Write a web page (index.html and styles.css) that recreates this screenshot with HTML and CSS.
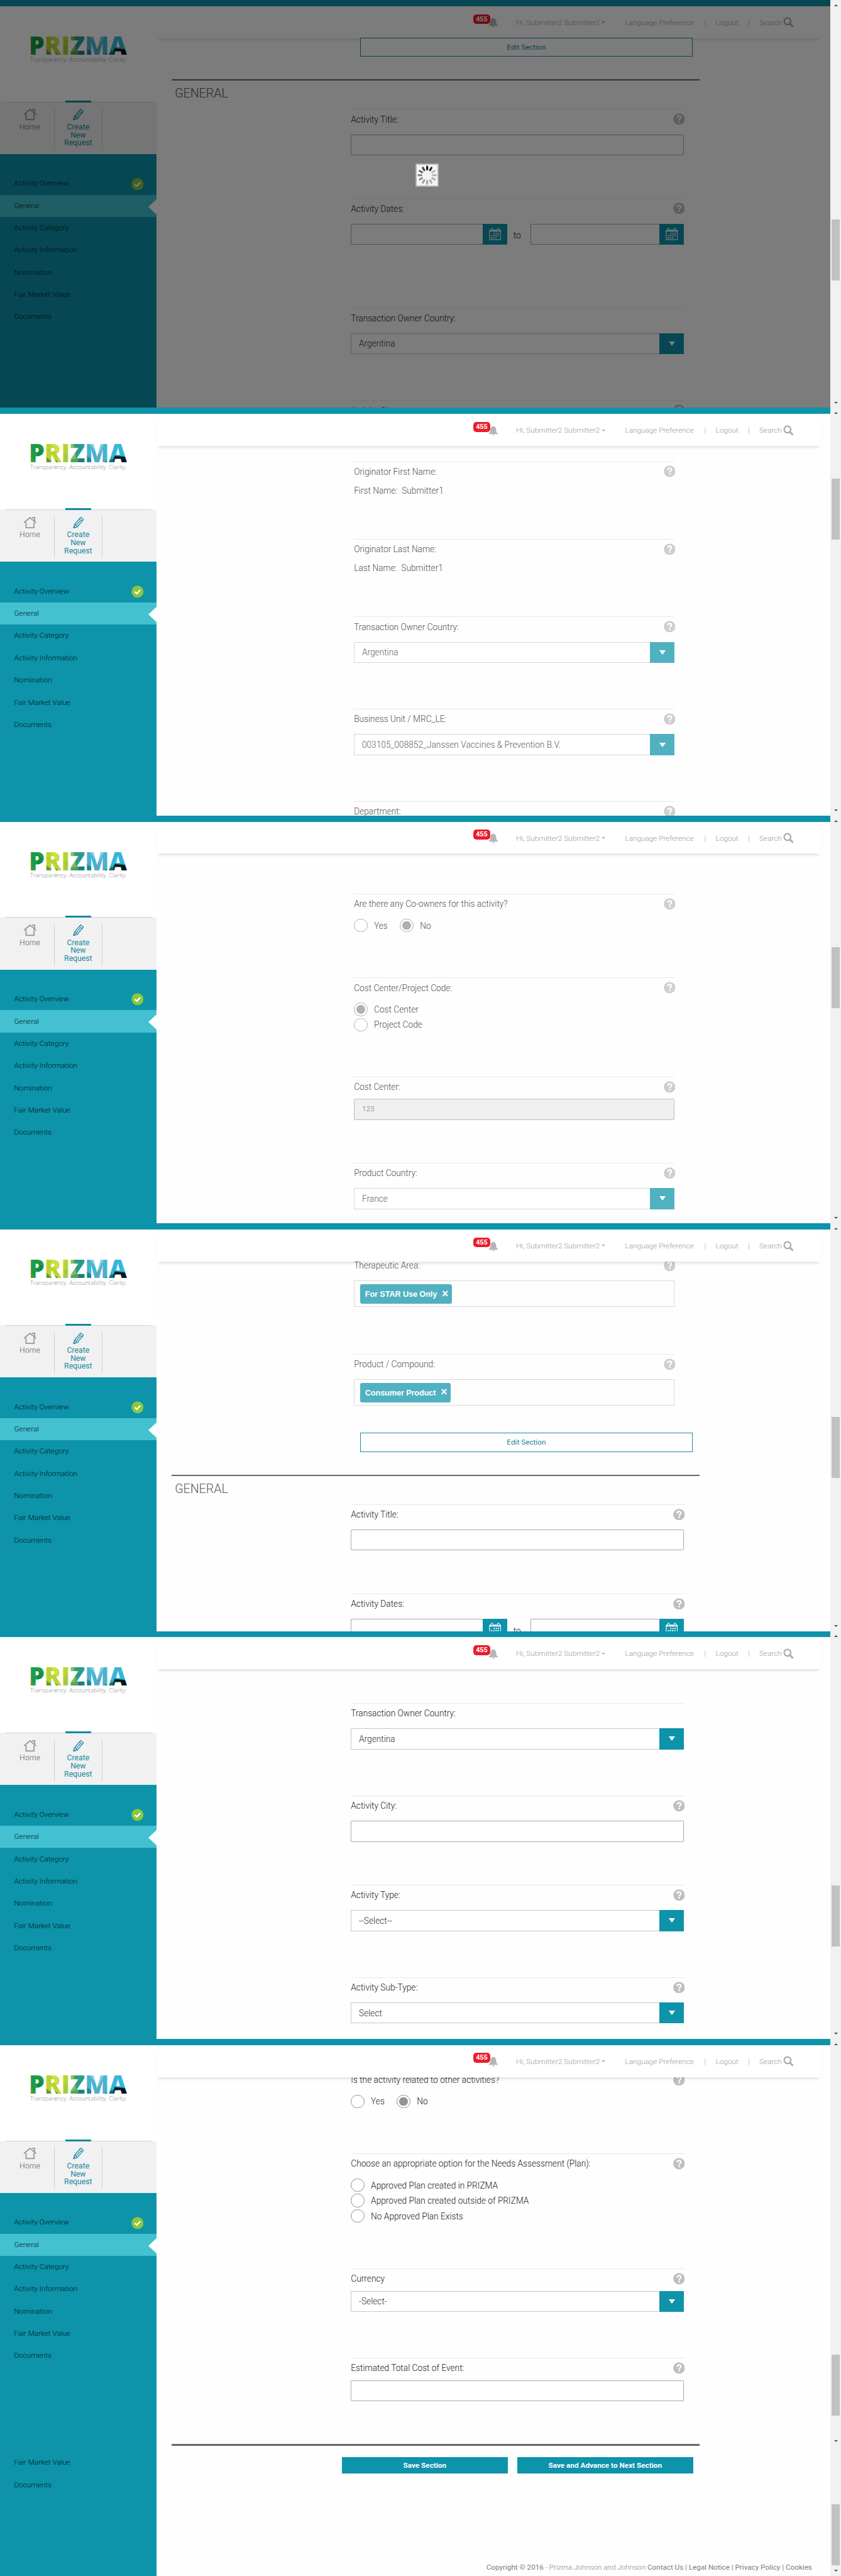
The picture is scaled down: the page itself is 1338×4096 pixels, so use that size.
FILE: index.html
```html
<!DOCTYPE html>
<html lang="en">
<head>
<meta charset="utf-8">
<title>PRIZMA - Create New Request</title>
<link rel="stylesheet" href="styles.css">
</head>
<body>
<svg class="defs" width="0" height="0" aria-hidden="true">
  <defs>
    <pattern id="facets" width="160" height="44" patternUnits="userSpaceOnUse">
      <rect width="160" height="44" fill="#1c9c48"/>
      <path d="M0 22L14 30V42H0Z" fill="#3f9a3c"/><path d="M10 4L26 14L14 30Z" fill="#0f8f3f"/>
      <path d="M24 0H64V42H24Z" fill="#b9d430"/><path d="M24 20L40 32L48 42H24Z" fill="#5d9a3a"/>
      <path d="M34 0L52 0L44 18Z" fill="#cfe03a"/><path d="M40 26L50 34V42H38Z" fill="#2c5d34"/>
      <path d="M52 20L64 14V42H52Z" fill="#a5cb3c"/>
      <path d="M64 0H90V42H64Z" fill="#7fbf55"/><path d="M72 0H90V16L76 26Z" fill="#2f9a8a"/>
      <path d="M64 28L90 20V42H64Z" fill="#4aa564"/><path d="M80 24L90 20V42H76Z" fill="#1b7f78"/>
      <path d="M89 0H130V42H89Z" fill="#46b3cf"/><path d="M89 18L102 26L96 42H89Z" fill="#1a8796"/>
      <path d="M96 0L112 18L122 0Z" fill="#7cc9e0"/><path d="M108 20L122 12V42H112Z" fill="#5aa9c2"/>
      <path d="M124 42L134 22L142 0H126Z" fill="#2eb0cf"/><path d="M126 0H160V22L134 24Z" fill="#33b7da"/>
      <path d="M122 30L140 24L136 42H122Z" fill="#146a7a"/><path d="M138 20L160 22V42H134Z" fill="#04171c"/>
    </pattern>
    <symbol id="logo" viewBox="0 0 160 44">
      <text x="-1" y="31" class="logo-word" textLength="159" lengthAdjust="spacingAndGlyphs" fill="url(#facets)">PRIZMA</text>
      <text x="1" y="41.5" class="logo-tag" textLength="157" lengthAdjust="spacingAndGlyphs">Transparency. Accountability. Clarity.</text>
    </symbol>
    <symbol id="home" viewBox="0 0 22 20">
      <path d="M1 10.5L11 2L21 10.5M14.5 2H18.5V8M4.5 9.5V18.6H17.5V9.5" fill="none" stroke="#9b9b9b" stroke-width="1.9"/>
    </symbol>
    <symbol id="pencil" viewBox="0 0 18 20">
      <path d="M1 19L2.8 13L12.6 1.6L17 5.4L7.2 17ZM2.8 13L7.2 17M10.4 4.2L14.8 8M5 15L13 5.8" fill="none" stroke="#1888a0" stroke-width="1.3" stroke-linejoin="round"/>
      <path d="M1 19L2 15.6L4.4 17.8Z" fill="#1888a0"/>
    </symbol>
    <symbol id="check" viewBox="0 0 20 20">
      <circle cx="10" cy="10" r="9.7" fill="#8dc63f"/>
      <path d="M5.5 10.2L8.8 13.2L14.6 7.2" fill="none" stroke="#fff" stroke-width="2.4"/>
    </symbol>
    <symbol id="bell" viewBox="0 0 16 16">
      <path d="M8 0.5C5 1 3.4 3.2 3.4 6.5C3.4 10 2.4 11.4 0.5 12.8V13.5H15.5V12.8C13.6 11.4 12.6 10 12.6 6.5C12.6 3.2 11 1 8 0.5ZM6 14.2A2 1.8 0 0 0 10 14.2Z" fill="#b5b5b5"/>
    </symbol>
    <symbol id="search" viewBox="0 0 17 17">
      <circle cx="7" cy="7" r="5.4" fill="none" stroke="#acacac" stroke-width="2.3"/>
      <path d="M11 11L15.2 15.2" stroke="#acacac" stroke-width="3" stroke-linecap="round"/>
    </symbol>
    <symbol id="help" viewBox="0 0 20 20">
      <circle cx="10" cy="10" r="9.8" fill="#bfbfbf"/>
      <path d="M6.9 7.8C7 5.6 8.3 4.7 10.1 4.7C12 4.7 13.2 5.8 13.2 7.4C13.2 9.6 10.3 9.6 10.3 12.2" fill="none" stroke="#fff" stroke-width="2.5"/>
      <rect x="9" y="13.4" width="2.6" height="2.6" fill="#fff"/>
    </symbol>
    <symbol id="calendar" viewBox="0 0 20 21">
      <path d="M1 4.5H19V19.5H1Z" fill="none" stroke="#fff" stroke-width="1.2"/>
      <path d="M1 3.5H19V6.5H1Z" fill="#fff"/>
      <path d="M3.5 5V1H6V5M14 5V1H16.5V5" fill="#0d93aa" stroke="#fff" stroke-width="1"/>
      <path d="M7.5 9.5H17M3.5 13H17M3.5 16.5H13.5" stroke="#fff" stroke-width="2" stroke-dasharray="2 1.5"/>
    </symbol>
  </defs>
</svg>

<div class="page">

<section class="frame frame-1">
  <div class="topbar"></div>
  <aside class="sidebar">
    <div class="brand"><svg class="logo"><use href="#logo"/></svg></div>
    <nav class="tabs">
      <a class="tab home"><svg class="tab-icon"><use href="#home"/></svg>Home</a>
      <a class="tab create"><svg class="tab-icon"><use href="#pencil"/></svg>Create<br>New<br>Request</a>
    </nav>
    <ul class="menu">
      <li>Activity Overview<svg class="check"><use href="#check"/></svg></li>
      <li class="current">General</li><li>Activity Category</li><li>Activity Information</li><li>Nomination</li><li>Fair Market Value</li><li>Documents</li>
    </ul>
  </aside>
  <main class="main">
    <header class="header">
      <span class="alerts"><b class="badge">455</b><svg class="bell"><use href="#bell"/></svg></span>
      <span class="user">Hi, Submitter2 Submitter2<i class="caret"></i></span>
      <span class="lang">Language Preference</span><span class="bar">|</span><span class="logout">Logout</span><span class="bar">|</span>
      <span class="search">Search</span><svg class="glass"><use href="#search"/></svg>
    </header>
    <a class="edit">Edit Section</a>
    <h2 class="section-title">GENERAL</h2>
    <div class="field">
      <div class="label">Activity Title:<svg class="help"><use href="#help"/></svg></div>
      <div class="input"></div>
    </div>
    <div class="field dates-field">
      <div class="label">Activity Dates:<svg class="help"><use href="#help"/></svg></div>
      <div class="dates"><div class="date from"><span class="cal"><svg><use href="#calendar"/></svg></span></div><span class="to">to</span><div class="date until"><span class="cal"><svg><use href="#calendar"/></svg></span></div></div>
    </div>
    <div class="field select-field">
      <div class="label">Transaction Owner Country:</div>
      <div class="select">Argentina<span class="drop"></span></div>
    </div>
    <div class="field">
      <div class="label">Activity City:<svg class="help"><use href="#help"/></svg></div>
      <div class="input"></div>
    </div>
  </main>
  <div class="scrollbar"><i class="up"></i><i class="thumb"></i><i class="down"></i></div>
  <div class="veil">
    <svg class="spinner" viewBox="-17 -17 34 34">
      <g stroke-width="3.2" stroke-linecap="round">
        <path d="M0-9.5V-14" stroke="#111"/><path d="M0-9.5V-14" stroke="#222" transform="rotate(30)"/>
        <path d="M0-9.5V-14" stroke="#bbb" transform="rotate(60)"/><path d="M0-9.5V-14" stroke="#b5b5b5" transform="rotate(90)"/>
        <path d="M0-9.5V-14" stroke="#b0b0b0" transform="rotate(120)"/><path d="M0-9.5V-14" stroke="#aaa" transform="rotate(150)"/>
        <path d="M0-9.5V-14" stroke="#a5a5a5" transform="rotate(180)"/><path d="M0-9.5V-14" stroke="#9c9c9c" transform="rotate(210)"/>
        <path d="M0-9.5V-14" stroke="#939393" transform="rotate(240)"/><path d="M0-9.5V-14" stroke="#858585" transform="rotate(270)"/>
        <path d="M0-9.5V-14" stroke="#6a6a6a" transform="rotate(300)"/><path d="M0-9.5V-14" stroke="#444" transform="rotate(330)"/>
      </g>
    </svg>
  </div>
</section>

<section class="frame frame-2">
  <div class="topbar"></div>
  <aside class="sidebar">
    <div class="brand"><svg class="logo"><use href="#logo"/></svg></div>
    <nav class="tabs">
      <a class="tab home"><svg class="tab-icon"><use href="#home"/></svg>Home</a>
      <a class="tab create"><svg class="tab-icon"><use href="#pencil"/></svg>Create<br>New<br>Request</a>
    </nav>
    <ul class="menu">
      <li>Activity Overview<svg class="check"><use href="#check"/></svg></li>
      <li class="current">General</li><li>Activity Category</li><li>Activity Information</li><li>Nomination</li><li>Fair Market Value</li><li>Documents</li>
    </ul>
  </aside>
  <main class="main">
    <header class="header">
      <span class="alerts"><b class="badge">455</b><svg class="bell"><use href="#bell"/></svg></span>
      <span class="user">Hi, Submitter2 Submitter2<i class="caret"></i></span>
      <span class="lang">Language Preference</span><span class="bar">|</span><span class="logout">Logout</span><span class="bar">|</span>
      <span class="search">Search</span><svg class="glass"><use href="#search"/></svg>
    </header>
    <div class="locked">
      <div class="field text-field">
        <div class="label">Originator First Name:<svg class="help"><use href="#help"/></svg></div>
        <div class="value">First Name:&nbsp; Submitter1</div>
      </div>
      <div class="field text-field">
        <div class="label">Originator Last Name:<svg class="help"><use href="#help"/></svg></div>
        <div class="value">Last Name:&nbsp; Submitter1</div>
      </div>
      <div class="field select-field">
        <div class="label">Transaction Owner Country:<svg class="help"><use href="#help"/></svg></div>
        <div class="select">Argentina<span class="drop"></span></div>
      </div>
      <div class="field select-field">
        <div class="label">Business Unit / MRC_LE:<svg class="help"><use href="#help"/></svg></div>
        <div class="select">003105_008852_Janssen Vaccines &amp; Prevention B.V.<span class="drop"></span></div>
      </div>
      <div class="field">
        <div class="label">Department:<svg class="help"><use href="#help"/></svg></div>
      </div>
    </div>
  </main>
  <div class="scrollbar"><i class="up"></i><i class="thumb"></i><i class="down"></i></div>
</section>

<section class="frame frame-3">
  <div class="topbar"></div>
  <aside class="sidebar">
    <div class="brand"><svg class="logo"><use href="#logo"/></svg></div>
    <nav class="tabs">
      <a class="tab home"><svg class="tab-icon"><use href="#home"/></svg>Home</a>
      <a class="tab create"><svg class="tab-icon"><use href="#pencil"/></svg>Create<br>New<br>Request</a>
    </nav>
    <ul class="menu">
      <li>Activity Overview<svg class="check"><use href="#check"/></svg></li>
      <li class="current">General</li><li>Activity Category</li><li>Activity Information</li><li>Nomination</li><li>Fair Market Value</li><li>Documents</li>
    </ul>
  </aside>
  <main class="main">
    <header class="header">
      <span class="alerts"><b class="badge">455</b><svg class="bell"><use href="#bell"/></svg></span>
      <span class="user">Hi, Submitter2 Submitter2<i class="caret"></i></span>
      <span class="lang">Language Preference</span><span class="bar">|</span><span class="logout">Logout</span><span class="bar">|</span>
      <span class="search">Search</span><svg class="glass"><use href="#search"/></svg>
    </header>
    <div class="locked">
      <div class="field owners-field">
        <div class="label">Are there any Co-owners for this activity?<svg class="help"><use href="#help"/></svg></div>
        <div class="radios"><span class="radio"></span><span class="choice">Yes</span><span class="radio on"></span><span class="choice">No</span></div>
      </div>
      <div class="field code-field">
        <div class="label">Cost Center/Project Code:<svg class="help"><use href="#help"/></svg></div>
        <div class="radios"><span class="radio on"></span><span class="choice">Cost Center</span></div>
        <div class="radios"><span class="radio"></span><span class="choice">Project Code</span></div>
      </div>
      <div class="field tight center-field">
        <div class="label">Cost Center:<svg class="help"><use href="#help"/></svg></div>
        <div class="input disabled">123</div>
      </div>
      <div class="field select-field">
        <div class="label">Product Country:<svg class="help"><use href="#help"/></svg></div>
        <div class="select">France<span class="drop"></span></div>
      </div>
    </div>
  </main>
  <div class="scrollbar"><i class="up"></i><i class="thumb"></i><i class="down"></i></div>
</section>

<section class="frame frame-4">
  <div class="topbar"></div>
  <aside class="sidebar">
    <div class="brand"><svg class="logo"><use href="#logo"/></svg></div>
    <nav class="tabs">
      <a class="tab home"><svg class="tab-icon"><use href="#home"/></svg>Home</a>
      <a class="tab create"><svg class="tab-icon"><use href="#pencil"/></svg>Create<br>New<br>Request</a>
    </nav>
    <ul class="menu">
      <li>Activity Overview<svg class="check"><use href="#check"/></svg></li>
      <li class="current">General</li><li>Activity Category</li><li>Activity Information</li><li>Nomination</li><li>Fair Market Value</li><li>Documents</li>
    </ul>
  </aside>
  <main class="main">
    <header class="header">
      <span class="alerts"><b class="badge">455</b><svg class="bell"><use href="#bell"/></svg></span>
      <span class="user">Hi, Submitter2 Submitter2<i class="caret"></i></span>
      <span class="lang">Language Preference</span><span class="bar">|</span><span class="logout">Logout</span><span class="bar">|</span>
      <span class="search">Search</span><svg class="glass"><use href="#search"/></svg>
    </header>
    <div class="locked">
      <div class="field tag-field">
        <div class="label">Therapeutic Area:<svg class="help"><use href="#help"/></svg></div>
        <div class="tags"><span class="tag">For STAR Use Only<b class="remove">×</b></span></div>
      </div>
      <div class="field tag-field last">
        <div class="label">Product / Compound:<svg class="help"><use href="#help"/></svg></div>
        <div class="tags"><span class="tag">Consumer Product<b class="remove">×</b></span></div>
      </div>
    </div>
    <a class="edit">Edit Section</a>
    <h2 class="section-title">GENERAL</h2>
    <div class="field">
      <div class="label">Activity Title:<svg class="help"><use href="#help"/></svg></div>
      <div class="input"></div>
    </div>
    <div class="field dates-field">
      <div class="label">Activity Dates:<svg class="help"><use href="#help"/></svg></div>
      <div class="dates"><div class="date from"><span class="cal"><svg><use href="#calendar"/></svg></span></div><span class="to">to</span><div class="date until"><span class="cal"><svg><use href="#calendar"/></svg></span></div></div>
    </div>
  </main>
  <div class="scrollbar"><i class="up"></i><i class="thumb"></i><i class="down"></i></div>
</section>

<section class="frame frame-5">
  <div class="topbar"></div>
  <aside class="sidebar">
    <div class="brand"><svg class="logo"><use href="#logo"/></svg></div>
    <nav class="tabs">
      <a class="tab home"><svg class="tab-icon"><use href="#home"/></svg>Home</a>
      <a class="tab create"><svg class="tab-icon"><use href="#pencil"/></svg>Create<br>New<br>Request</a>
    </nav>
    <ul class="menu">
      <li>Activity Overview<svg class="check"><use href="#check"/></svg></li>
      <li class="current">General</li><li>Activity Category</li><li>Activity Information</li><li>Nomination</li><li>Fair Market Value</li><li>Documents</li>
    </ul>
  </aside>
  <main class="main">
    <header class="header">
      <span class="alerts"><b class="badge">455</b><svg class="bell"><use href="#bell"/></svg></span>
      <span class="user">Hi, Submitter2 Submitter2<i class="caret"></i></span>
      <span class="lang">Language Preference</span><span class="bar">|</span><span class="logout">Logout</span><span class="bar">|</span>
      <span class="search">Search</span><svg class="glass"><use href="#search"/></svg>
    </header>
    <div class="fields">
      <div class="field select-field">
        <div class="label">Transaction Owner Country:</div>
        <div class="select">Argentina<span class="drop"></span></div>
      </div>
      <div class="field">
        <div class="label">Activity City:<svg class="help"><use href="#help"/></svg></div>
        <div class="input"></div>
      </div>
      <div class="field select-field">
        <div class="label">Activity Type:<svg class="help"><use href="#help"/></svg></div>
        <div class="select">--Select--<span class="drop"></span></div>
      </div>
      <div class="field">
        <div class="label">Activity Sub-Type:<svg class="help"><use href="#help"/></svg></div>
        <div class="select">Select<span class="drop"></span></div>
      </div>
    </div>
  </main>
  <div class="scrollbar"><i class="up"></i><i class="thumb"></i><i class="down"></i></div>
</section>

<section class="frame frame-6">
  <div class="topbar"></div>
  <aside class="sidebar">
    <div class="brand"><svg class="logo"><use href="#logo"/></svg></div>
    <nav class="tabs">
      <a class="tab home"><svg class="tab-icon"><use href="#home"/></svg>Home</a>
      <a class="tab create"><svg class="tab-icon"><use href="#pencil"/></svg>Create<br>New<br>Request</a>
    </nav>
    <ul class="menu">
      <li>Activity Overview<svg class="check"><use href="#check"/></svg></li>
      <li class="current">General</li><li>Activity Category</li><li>Activity Information</li><li>Nomination</li><li>Fair Market Value</li><li>Documents</li>
    </ul>
  </aside>
  <main class="main">
    <header class="header">
      <span class="alerts"><b class="badge">455</b><svg class="bell"><use href="#bell"/></svg></span>
      <span class="user">Hi, Submitter2 Submitter2<i class="caret"></i></span>
      <span class="lang">Language Preference</span><span class="bar">|</span><span class="logout">Logout</span><span class="bar">|</span>
      <span class="search">Search</span><svg class="glass"><use href="#search"/></svg>
    </header>
    <div class="fields">
      <div class="field owners-field">
        <div class="label">Is the activity related to other activities?<svg class="help"><use href="#help"/></svg></div>
        <div class="radios"><span class="radio"></span><span class="choice">Yes</span><span class="radio on"></span><span class="choice">No</span></div>
      </div>
      <div class="field plan-field">
        <div class="label">Choose an appropriate option for the Needs Assessment (Plan):<svg class="help"><use href="#help"/></svg></div>
        <div class="radios"><span class="radio"></span><span class="choice">Approved Plan created in PRIZMA</span></div>
        <div class="radios"><span class="radio"></span><span class="choice">Approved Plan created outside of PRIZMA</span></div>
        <div class="radios"><span class="radio"></span><span class="choice">No Approved Plan Exists</span></div>
      </div>
      <div class="field tight">
        <div class="label">Currency<svg class="help"><use href="#help"/></svg></div>
        <div class="select">-Select-<span class="drop"></span></div>
      </div>
      <div class="field tight center-field">
        <div class="label">Estimated Total Cost of Event:<svg class="help"><use href="#help"/></svg></div>
        <div class="input"></div>
      </div>
    </div>
    <div class="rule"></div>
  </main>
  <div class="scrollbar"><i class="up"></i><i class="thumb"></i><i class="down"></i></div>
</section>

<section class="frame frame-7">
  <aside class="sidebar">
    <ul class="menu"><li>Fair Market Value</li><li>Documents</li></ul>
  </aside>
  <main class="main">
    <div class="actions"><a class="save">Save Section</a><a class="save advance">Save and Advance to Next Section</a></div>
    <footer class="footer"><b>Copyright © 2016</b> - Prizma Johnson and Johnson <b>Contact Us | Legal Notice | Privacy Policy | Cookies</b></footer>
  </main>
  <div class="scrollbar"><i class="thumb"></i><i class="down"></i></div>
</section>

</div>
</body>
</html>
```

FILE: styles.css
```css
* { box-sizing: border-box; }

html { overflow: hidden; }

body {
  margin: 0;
  background: #fff;
  font-family: Roboto, "Liberation Sans", sans-serif;
  font-size: 14px;
  color: #222;
}

.defs { position: absolute; }

.page {
  zoom: 0.97945;
  width: 1366px;
  height: 4182px;
  overflow: hidden;
}

.frame {
  position: relative;
  display: grid;
  grid-template-columns: 254px 1095px 17px;
  grid-template-rows: 10px 652px;
  height: 662px;
  overflow: hidden;
}

.topbar { grid-column: 1 / 3; background: #0d93aa; }

/* sidebar */
.sidebar { grid-column: 1; background: #0d93aa; }

.brand {
  height: 155px;
  padding: 48px 0 0 48px;
  background: #fff;
}

.logo { display: block; width: 160px; height: 44px; }
.logo-word { font: 800 41px "Open Sans", sans-serif; }
.logo-tag { font: 300 9.5px "Open Sans", sans-serif; fill: #8d8d8d; }

.tabs {
  display: flex;
  height: 85px;
  padding: 11px 0 7px 9px;
  background: linear-gradient(#d0d0d0, #d0d0d0) 9px 0 / 236px 1px no-repeat #f1f1f1;
}

.tab {
  position: relative;
  display: flex;
  flex-direction: column;
  align-items: center;
  width: 80px;
  border-right: 1px solid #cfcfcf;
  font-size: 12.5px;
  font-weight: 400;
  line-height: 13px;
  text-align: center;
  color: #8f8f8f;
}

.tab.create { width: 77px; color: #1888a0; }

.tab.create::before {
  content: "";
  position: absolute;
  top: -13px;
  left: 17px;
  width: 42px;
  height: 3px;
  background: #1389a0;
}

.tab-icon { width: 22px; height: 20px; flex: none; margin-bottom: 4px; }

.menu { margin: 0; padding: 30px 0 0; list-style: none; }

.menu li {
  display: flex;
  align-items: center;
  justify-content: space-between;
  height: 36.1px;
  padding: 0 21px 1px 23px;
  font-size: 12px;
  font-weight: 300;
  color: #00171d;
}

.menu .current {
  background: #43c1d0;
  padding-right: 0;
}

.current::after {
  content: "";
  margin-top: 4px;
  border: solid transparent;
  border-width: 13px 14px 13px 0;
  border-right-color: #fff;
}

.check { width: 20px; height: 20px; margin-top: 2px; }

/* header */
.main { grid-column: 2; min-width: 0; background: #fefefe; }

.header {
  position: relative;
  z-index: 1;
  display: flex;
  align-items: center;
  width: 1078px;
  height: 52px;
  padding: 1px 0 0 514.5px;
  background: #fff;
  box-shadow: 0 5px 5px -2px rgba(0, 0, 0, .13);
  font-size: 12px;
  font-weight: 300;
  color: #9a9a9a;
  white-space: nowrap;
}

.header span { flex: none; }

.alerts { display: flex; width: 70px; }

.badge {
  width: 28px;
  height: 16px;
  margin-top: -5px;
  border-radius: 5px;
  background: #ec1c2b;
  color: #fff;
  font-size: 11px;
  font-weight: 700;
  line-height: 16px;
  text-align: center;
}

.bell { width: 16px; height: 16px; margin: 1px 0 0 -3px; }
.user { display: flex; align-items: center; width: 177px; }

.caret {
  margin-left: 3px;
  border: solid transparent;
  border-width: 4px 4px 0;
  border-top-color: #b0b0b0;
}

.lang { width: 113px; }
.bar { width: 34px; text-align: center; }
.logout { width: 37px; }
.search { width: 38.5px; }
.glass { width: 17px; height: 17px; flex: none; }

/* form */
.field {
  width: 542px;
  height: 145px;
  margin-left: 316px;
  border-top: 1px solid #e8e8e8;
  font-weight: 300;
}

.label {
  position: relative;
  display: flex;
  align-items: center;
  justify-content: space-between;
  height: 19px;
  margin: 6px 0 15px;
}

.tight .label { margin-bottom: 10px; }

.help { width: 19px; height: 19px; }

.input, .select, .date {
  width: 541px;
  height: 34px;
  border: 1px solid #a9a9a9;
  border-radius: 2px;
  background: #fff;
}

.select {
  display: flex;
  align-items: center;
  justify-content: space-between;
  padding-left: 12px;
  border-color: #c6c6c6;
  border-radius: 0;
  color: #333;
}

.drop {
  display: flex;
  align-items: center;
  justify-content: center;
  width: 40px;
  height: 34px;
  margin-right: -1px;
  background: #0d93aa;
}

.drop::before {
  content: "";
  border: solid transparent;
  border-width: 8px 6px 0;
  border-top-color: #fff;
}

.dates { display: flex; align-items: center; }

.date { display: flex; justify-content: flex-end; width: 249px; border-radius: 0; }
.date.from { width: 254px; }

.cal {
  display: flex;
  align-items: center;
  justify-content: center;
  width: 40px;
  height: 34px;
  margin: -1px -1px -1px 0;
  background: #0d93aa;
}

.cal svg { width: 20px; height: 21px; }
.to { width: 38px; padding: 4px 0 0 10px; }

.select-field { height: 150px; }
.dates-field { height: 178px; }
.text-field { height: 126px; }
.text-field .label { margin-bottom: 12px; }
.value { height: 19px; line-height: 19px; }

.owners-field { height: 136px; }
.code-field { height: 161px; }
.plan-field { height: 187px; }
.center-field { height: 140px; }

.radios { display: flex; align-items: center; height: 25px; }
.label + .radios { margin-top: -2px; }

.radio {
  width: 22px;
  height: 22px;
  border: 1px solid #8f8f8f;
  border-radius: 50%;
  background: #fff;
}

.radio.on { background: radial-gradient(circle, #949494 6.7px, #fff 7.4px); }
.choice { margin: 0 20px 0 10.5px; }

.locked .field { width: 521px; margin-left: 321px; color: #555; }
.locked .input, .locked .select, .tags { width: 521px; }
.locked .select { border-color: #d6d6d6; color: #666; }
.locked .drop { background: #50b1c1; }
.locked .help { opacity: .75; }
.locked .label { margin-right: -1px; }
.locked .radio { border-color: #b0b0b0; }
.locked .radio.on { background: radial-gradient(circle, #b0b0b0 6.7px, #fff 7.4px); }

.input.disabled {
  padding-left: 12px;
  border-color: #bdbdbd;
  background: #f0f0f0;
  color: #777;
  font-size: 12px;
  line-height: 32px;
}

.tag-field { height: 160px; }
.tag-field.last { height: 128px; }

.tags {
  display: flex;
  height: 43px;
  padding: 5px 9px;
  border: 1px solid #d9d9d9;
}

.tag {
  display: flex;
  align-items: center;
  gap: 8px;
  height: 32px;
  padding: 0 6px 1px 8px;
  border-radius: 3px;
  background: #50b1c1;
  color: #fff;
  font: 700 13px "Liberation Sans", sans-serif;
  letter-spacing: -.12px;
}

.remove { font-size: 18px; line-height: 18px; }

.edit {
  position: relative;
  z-index: 2;
  display: flex;
  align-items: center;
  justify-content: center;
  width: 540px;
  height: 31px;
  margin-left: 331px;
  border: 1px solid #1c8b9c;
  background: #fff;
  color: #14879c;
  font-size: 12px;
}

.section-title {
  width: 857px;
  height: 48px;
  margin: 37px 0 0 25px;
  padding: 9px 0 0 5px;
  border-top: 3px solid #666669;
  color: #5c5c5c;
  font-size: 20px;
  font-weight: 300;
  line-height: 24px;
}

.frame-1 .edit { margin-top: -1px; }
.frame-2 .locked { padding-top: 25px; }
.frame-3 .locked { padding-top: 65px; }
.frame-4 .locked { margin-top: -10px; }
.frame-5 .fields { padding-top: 55px; }
.frame-6 .fields { margin-top: -12px; }

.rule { height: 3px; width: 857px; margin-left: 25px; background: #666669; }

/* bottom strip */
.frame-7 { grid-template-rows: 210px; height: 210px; }
.frame-7 .menu { padding-top: 8px; }
.frame-7 .main { display: flex; flex-direction: column; }

.actions { display: flex; gap: 15px; padding: 17px 0 0 301px; }

.save {
  width: 270px;
  height: 27px;
  background: #0d93aa;
  color: #fff;
  font-size: 12px;
  font-weight: 700;
  line-height: 27px;
  text-align: center;
}

.advance { width: 286px; }

.footer {
  margin: auto 30px 4px 0;
  font-size: 12px;
  line-height: 18px;
  text-align: right;
  color: #888;
  font-weight: 300;
  letter-spacing: -.035px;
}

.footer b { font-weight: 400; color: #7c7c7c; }

/* scrollbars */
.scrollbar {
  grid-column: 3;
  grid-row: 1 / -1;
  display: flex;
  flex-direction: column;
  align-items: center;
  background: #f1f1f1;
}

.up, .down { border: solid transparent; }
.up { margin-top: 7px; border-width: 0 4px 4px; border-bottom-color: #505050; }
.down { margin: auto 0 7px; border-width: 4px 4px 0; border-top-color: #505050; }
.thumb { width: 13px; height: 99px; background: #c1c1c1; }

.frame-1 .thumb { margin-top: 346px; }
.frame-2 .thumb { margin-top: 105px; }
.frame-3 .thumb { margin-top: 204px; }
.frame-4 .thumb { margin-top: 304px; }
.frame-5 .thumb { margin-top: 403px; }
.frame-6 .thumb { margin-top: 503px; }
.frame-7 .thumb { margin-top: 94px; }

/* loading state */
.veil {
  position: absolute;
  inset: 0 17px 0 0;
  z-index: 3;
  background: rgba(0, 0, 0, .515);
}

.spinner {
  position: absolute;
  top: 265px;
  left: 675px;
  width: 38px;
  height: 38px;
  border: 3px solid #b4b4b4;
  background: #f4f4f4;
}
```
